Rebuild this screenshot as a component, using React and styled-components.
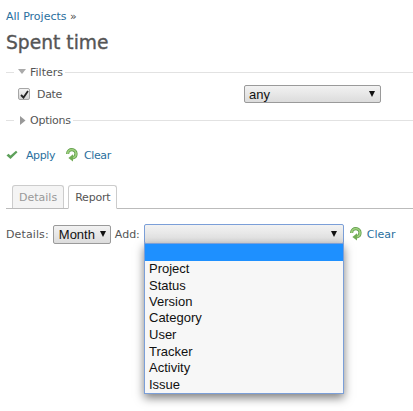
import React from "react";
import styled, { createGlobalStyle } from "styled-components";

const Global = createGlobalStyle`
  html, body { margin: 0; padding: 0; background: #fff; }
  body { font-family: "DejaVu Sans", Verdana, sans-serif; font-size: 11px; color: #484848; }
`;
const Page = styled.div`
  position: relative; width: 413px; height: 411px; overflow: hidden;
  padding: 10px 0 0 6px; box-sizing: border-box;
`;
const Link = styled.a`color: #2a6f9e; text-decoration: none;`;
const Crumb = styled.div`height: 14px; line-height: 14px; color: #484848;`;
const Title = styled.h2`
  margin: 7px 0 0; height: 24px; line-height: 24px; font-size: 18.7px; font-weight: 400; color: #555;
  -webkit-text-stroke: .35px #555;
`;
const Section = styled.div`
  display: flex; align-items: center; height: 14px; margin-top: 10px; width: 407px;
`;
const Rule = styled.span`height: 1px; background: #e2e2e2; flex: ${p => p.$grow ? 1 : "0 0 8px"};`;
const Legend = styled.span`
  display: flex; align-items: center; gap: 4px; padding: 0 2px 0 ${p => p.$pad}px; color: #555;
  letter-spacing: ${p => p.$ls || 0}px;
`;
const FilterRow = styled.div`
  display: grid; grid-template-columns: 226px 137px; align-items: center; padding-left: 12px; margin-top: 6px; height: 18px;
`;
const CheckLabel = styled.label`display: flex; align-items: center; gap: 7px; color: #555; letter-spacing: -.3px;`;
const Check = styled.span`
  width: 10px; height: 10px; border: 1px solid #a6a6a6; border-radius: 2px;
  background: linear-gradient(#f4f4f4, #d4d4d4); display: flex; align-items: center; justify-content: center;
`;
const SelectBox = styled.div`
  box-sizing: border-box; display: flex; align-items: center; justify-content: space-between;
  height: ${p => p.$h || 19}px; width: ${p => p.$w}px; padding: 0 ${p => p.$right || 5}px 0 ${p => p.$left || 4}px;
  border: 1px solid ${p => p.$focus ? "#7b9fd8" : "#9a9a9a"}; border-radius: 2px;
  background: linear-gradient(#f2f2f2, #dcdcdc);
  font-family: "Liberation Sans", Arial, sans-serif; font-size: 13px; color: #111;
`;
const Arrow = styled.span`
  width: 0; height: 0; border-left: 3.5px solid transparent; border-right: 3.5px solid transparent;
  border-top: 6px solid #111;
`;
const Actions = styled.div`display: flex; align-items: center; height: 14px; margin-top: 21px; letter-spacing: -.4px;`;
const ActionLink = styled(Link)`display: flex; align-items: center; gap: ${p => p.$gap}px; margin: 0 ${p => p.$mr || 0}px 0 ${p => p.$ml || 0}px;`;
const Tabs = styled.div`
  display: flex; align-items: flex-end; gap: 4px; height: 25px; margin-top: 21px; padding-left: 6px; width: 401px;
  border-bottom: 1px solid #bbb;
`;
const Tab = styled.div`
  box-sizing: border-box; height: ${p => p.$active ? 24 : 23}px; padding: 0 6px; display: flex; align-items: center;
  border: 1px solid #ccc; border-radius: 3px 3px 0 0;
  border-bottom: ${p => p.$active ? "1px solid #fff" : "none"};
  margin-bottom: ${p => p.$active ? -1 : 0}px;
  background: ${p => p.$active ? "#fff" : "#f4f4f4"}; color: ${p => p.$active ? "#555" : "#999"};
  letter-spacing: ${p => p.$active ? -.2 : 0}px;
`;
const DetailsRow = styled.div`display: flex; align-items: center; gap: 4px; height: 20px; margin-top: 15px; color: #555;`;
const RowLabel = styled.span`letter-spacing: ${p => p.$ls || 0}px;`;
const Dropdown = styled.div`
  position: absolute; left: 144px; top: 243px; width: 200px; height: 151px; box-sizing: border-box;
  border: 1px solid #7b9fd8; background: #f7f7f7; box-shadow: 0 4px 9px rgba(0,0,0,.5);
  font-family: "Liberation Sans", Arial, sans-serif; font-size: 13px; color: #111;
`;
const Option = styled.div`
  height: ${p => p.$h}px; line-height: ${p => p.$h}px; padding-left: 4px;
  background: ${p => p.$sel ? "#1e90ff" : "transparent"};
`;

const Tick = () => (
  <svg width="12" height="10" viewBox="0 0 12 10"><path d="M0.5 5.5 L2.5 3.8 L4.5 5.5 L10 0.8 L11.5 2.2 L4.5 9 Z" fill="#5da05a"/></svg>
);
const ringPath = "M2.6 6 C2.6 3 5 1.6 6.8 1.6 C9.2 1.6 11 3.6 11 5.8 C11 8.2 9.2 9.6 7.5 9.8";
const Reload = () => (
  <svg width="13" height="14" viewBox="0 0 13 14">
    <path d={ringPath} fill="none" stroke="#5d9a48" strokeWidth="3.2"/>
    <path d={ringPath} fill="none" stroke="#9ccf7c" strokeWidth="1.8"/>
    <path d="M8 6.2 L8 13.6 L3.4 9.9 Z" fill="#72ad55"/>
  </svg>
);
const CheckMark = () => (
  <svg width="9" height="9" viewBox="0 0 9 9"><path d="M1 5 L3.5 7.5 L8 1" fill="none" stroke="#222" strokeWidth="1.8"/></svg>
);
const Down = () => <svg width="8" height="6" viewBox="0 0 8 6"><path d="M0 0 H8 L4 5 Z" fill="#aaa"/></svg>;
const Right = () => <svg width="6" height="9" viewBox="0 0 6 9"><path d="M0 0 V9 L5.5 4.5 Z" fill="#999"/></svg>;

const options = [["Project", 16], ["Status", 17], ["Version", 16], ["Category", 16], ["User", 17], ["Tracker", 17], ["Activity", 16], ["Issue", 17]];

export default function App() {
  return (
    <Page>
      <Global />
      <Crumb><Link href="#">All Projects</Link> »</Crumb>
      <Title>Spent time</Title>
      <Section><Rule /><Legend $pad={4}><Down />Filters</Legend><Rule $grow /></Section>
      <FilterRow>
        <CheckLabel><Check><CheckMark /></Check>Date</CheckLabel>
        <SelectBox $w={137} $h={18}>any<Arrow /></SelectBox>
      </FilterRow>
      <Section><Rule /><Legend $pad={6} $ls={-.25}><Right />Options</Legend><Rule $grow /></Section>
      <Actions>
        <ActionLink href="#" $gap={8} $mr={10}><Tick />Apply</ActionLink>
        <ActionLink href="#" $gap={6}><Reload />Clear</ActionLink>
      </Actions>
      <Tabs>
        <Tab>Details</Tab>
        <Tab $active>Report</Tab>
      </Tabs>
      <DetailsRow>
        <RowLabel $ls={.12}>Details:</RowLabel>
        <SelectBox $w={58} $left={5} $right={4}>Month<Arrow /></SelectBox>
        <RowLabel>Add:</RowLabel>
        <SelectBox $w={200} $h={20} $focus $right={6}><span /><Arrow /></SelectBox>
        <ActionLink href="#" $gap={5} $ml={1}><Reload />Clear</ActionLink>
      </DetailsRow>
      <Dropdown>
        <Option $sel $h={17} />
        {options.map(([o, h]) => <Option key={o} $h={h}>{o}</Option>)}
      </Dropdown>
    </Page>
  );
}
